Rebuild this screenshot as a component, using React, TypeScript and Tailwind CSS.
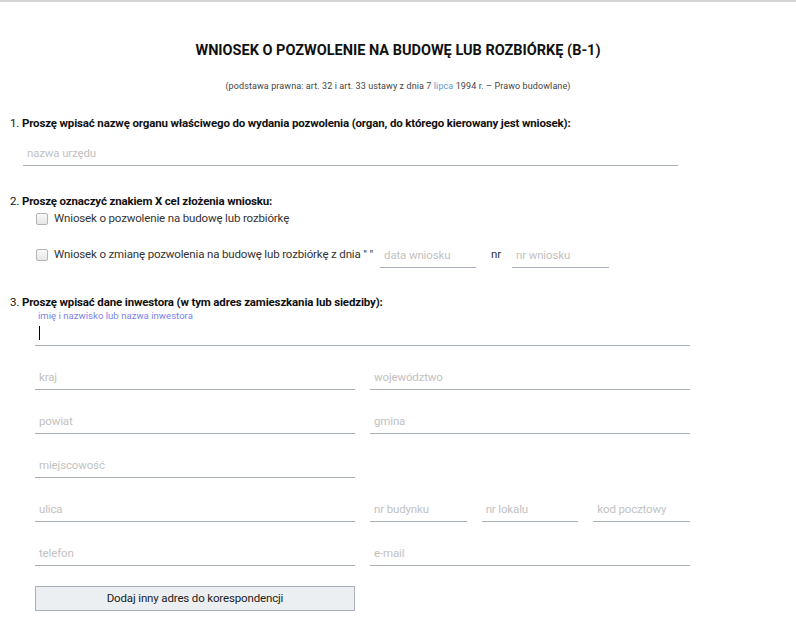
import React from "react";

const font = { fontFamily: "Roboto, 'Noto Sans', sans-serif" };

function Field({ placeholder, className = "" }: { placeholder: string; className?: string }) {
    return (
        <input
            type="text"
            placeholder={placeholder}
            className={`box-border h-[27px] border-0 border-b border-[#aab0b9] bg-transparent px-[4px] pt-[2px] text-[11.5px] tracking-[-0.15px] text-[#333] outline-none placeholder:text-[#c2c2c2] ${className}`}
        />
    );
}

function Checkbox() {
    return <span className="inline-block h-[12px] w-[12px] shrink-0 rounded-[2px] border border-[#b4b4b4] bg-gradient-to-b from-[#fafafa] to-[#e6e6e6]"></span>;
}

export default function App() {
    return (
        <div style={font} className="min-h-[624px] w-[796px] border-t-2 border-[#d3d3d3] bg-white text-[#111]">
            <h1 className="pt-[40px] text-center text-[14.5px] font-bold leading-[18px]">
                WNIOSEK O POZWOLENIE NA BUDOWĘ LUB ROZBIÓRKĘ (B-1)
            </h1>
            <p className="mt-[19px] text-center text-[9px] leading-[14px] tracking-[0.1px] text-[#444]">
                (podstawa prawna: art. 32 i art. 33 ustawy z dnia 7 <span className="text-[#5b9bd5]">lipca</span> 1994 r. – Prawo budowlane)
            </p>

            <div className="pl-[10px] text-[11.5px] tracking-[-0.15px]">
                <p className="mt-[22px] leading-[16px]">
                    1. <span className="font-bold">Proszę wpisać nazwę organu właściwego do wydania pozwolenia (organ, do którego kierowany jest wniosek):</span>
                </p>
                <div className="mt-[8px] pl-[13px]">
                    <Field placeholder="nazwa urzędu" className="w-[655px]" />
                </div>

                <p className="mt-[27px] leading-[16px]">
                    2. <span className="font-bold">Proszę oznaczyć znakiem X cel złożenia wniosku:</span>
                </p>
                <label className="mt-[2px] flex h-[16px] items-center pl-[26px] text-[#333]">
                    <Checkbox />
                    <span className="ml-[6px]">Wniosek o pozwolenie na budowę lub rozbiórkę</span>
                </label>
                <div className="mt-[14px] flex items-center pl-[26px] text-[#333]">
                    <Checkbox />
                    <span className="ml-[6px]">Wniosek o zmianę pozwolenia na budowę lub rozbiórkę z dnia " "</span>
                    <Field placeholder="data wniosku" className="ml-[7px] w-[96px]" />
                    <span className="ml-[15px] mr-[11px]">nr</span>
                    <Field placeholder="nr wniosku" className="w-[97px]" />
                </div>

                <p className="mt-[26px] leading-[16px]">
                    3. <span className="font-bold">Proszę wpisać dane inwestora (w tym adres zamieszkania lub siedziby):</span>
                </p>
                <div className="pl-[25px]">
                    <p className="pl-[3px] text-[9.6px] leading-[12px] tracking-normal text-[#7d82ea]">imię i nazwisko lub nazwa inwestora</p>
                    <div className="relative w-[655px]">
                        <input type="text" className="box-border h-[24px] w-full border-0 border-b border-[#aab0b9] bg-transparent px-[4px] text-[12px] outline-none" />
                        <span className="absolute left-[4px] top-[4px] h-[14px] w-[1px] bg-black"></span>
                    </div>

                    <div className="mt-[17px] grid w-[655px] grid-cols-2 gap-x-[15px] gap-y-[17px]">
                        <Field placeholder="kraj" className="w-full" />
                        <Field placeholder="województwo" className="w-full" />
                        <Field placeholder="powiat" className="w-full" />
                        <Field placeholder="gmina" className="w-full" />
                        <Field placeholder="miejscowość" className="w-full" />
                        <div></div>
                        <Field placeholder="ulica" className="w-full" />
                        <div className="grid grid-cols-3 gap-x-[15px]">
                            <Field placeholder="nr budynku" className="w-full" />
                            <Field placeholder="nr lokalu" className="w-full" />
                            <Field placeholder="kod pocztowy" className="w-full" />
                        </div>
                        <Field placeholder="telefon" className="w-full" />
                        <Field placeholder="e-mail" className="w-full" />
                    </div>

                    <button type="button" className="mt-[20px] box-border h-[25px] w-[320px] border border-[#a9b0bb] bg-[#eceff1] text-[11.5px] tracking-[-0.15px] text-[#222]">
                        Dodaj inny adres do korespondencji
                    </button>
                </div>
            </div>
        </div>
    );
}
